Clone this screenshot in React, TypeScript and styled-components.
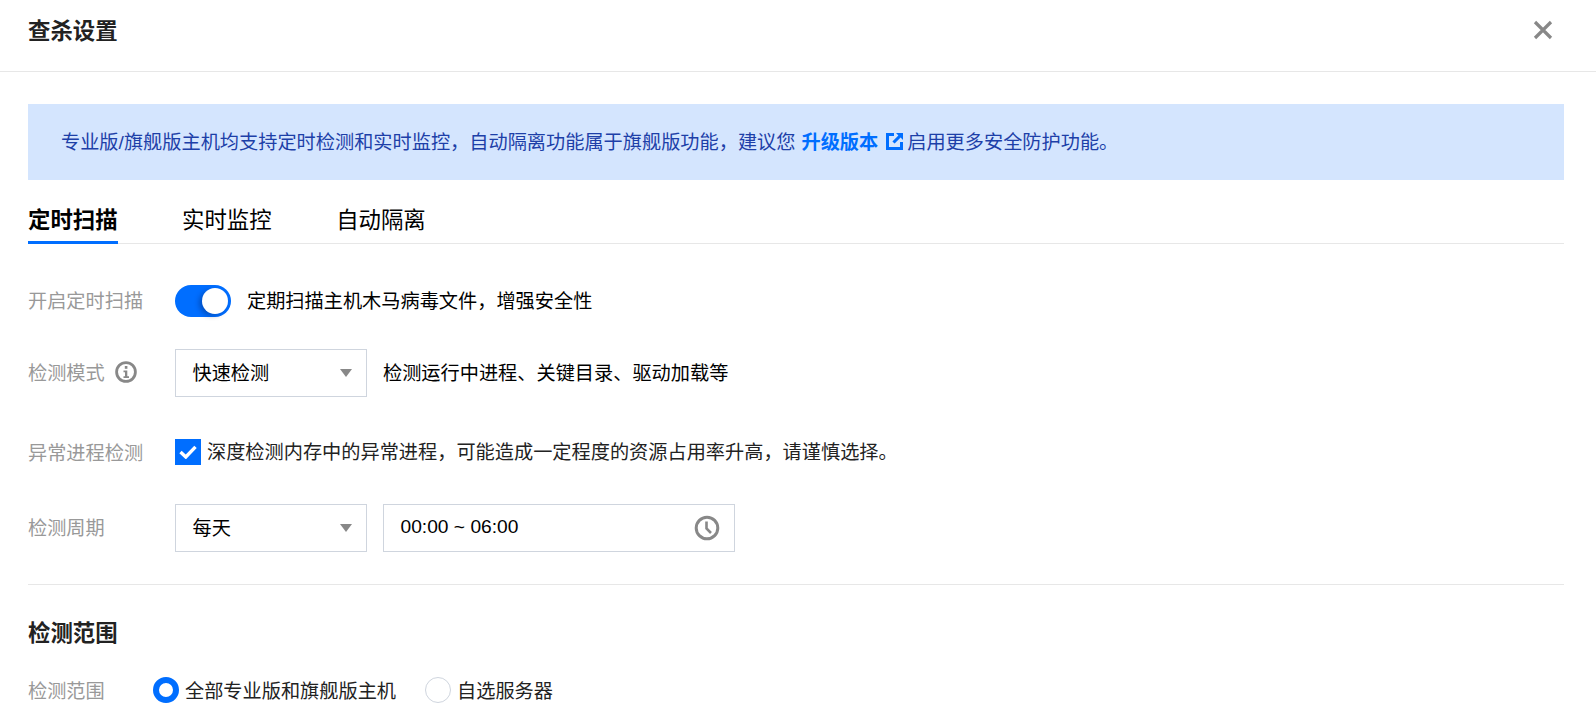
import React from 'react'
import styled, { createGlobalStyle } from 'styled-components'

const GlobalStyle = createGlobalStyle`
  html, body {
    margin: 0;
    height: 100%;
    overflow: hidden;
    background: #fff;
  }
  * {
    box-sizing: border-box;
  }
`

const Page = styled.div`
  width: 1596px;
  height: 726px;
  overflow: hidden;
  color: #000;
  font-family: 'Liberation Sans', 'Noto Sans CJK SC', sans-serif;
  font-size: 19.2px;
`

const Header = styled.header`
  display: flex;
  align-items: center;
  justify-content: space-between;
  height: 72px;
  padding: 0 43px 11px 28px;
  border-bottom: 1px solid #e7e7e7;
`

const Title = styled.h1`
  margin: 0 0 3px;
  font-size: 22.4px;
  font-weight: 700;
  color: #222;
`

const CloseButton = styled.button`
  display: flex;
  padding: 0;
  border: none;
  background: transparent;
`

const Body = styled.main`
  padding: 32px 32px 0 28px;
`

const Notice = styled.div`
  display: flex;
  align-items: center;
  height: 76px;
  padding: 0 33px 3px;
  background: #d4e5fe;
  color: #1d3fa8;
`

const NoticeLink = styled.a`
  display: inline-flex;
  align-items: center;
  gap: 8px;
  margin: 0 4px 0 6px;
  color: #006eff;
  font-weight: 700;

  svg {
    margin-top: 2px;
  }
`

const Tabs = styled.nav`
  display: flex;
  gap: 64.5px;
  height: 64px;
  margin-bottom: 41px;
  border-bottom: 1px solid #e7e7e7;
`

const Tab = styled.div<{ $active?: boolean }>`
  height: 64px;
  padding-top: 26px;
  font-size: 22.4px;
  line-height: 30px;
  font-weight: ${(p) => (p.$active ? 700 : 400)};
  border-bottom: 3px solid ${(p) => (p.$active ? '#006eff' : 'transparent')};
`

const Row = styled.div<{ $height: number; $gap?: number }>`
  display: flex;
  align-items: center;
  height: ${(p) => p.$height}px;
  margin-bottom: ${(p) => p.$gap ?? 0}px;
`

const Label = styled.div<{ $width?: number; $lift?: number }>`
  display: flex;
  align-items: center;
  gap: 10px;
  flex: none;
  width: ${(p) => p.$width ?? 147}px;
  padding-bottom: ${(p) => p.$lift ?? 3}px;
  color: #999;

  svg {
    margin-top: 1px;
  }
`

const Switch = styled.div`
  position: relative;
  flex: none;
  width: 56px;
  height: 32px;
  margin-right: 16px;
  border-radius: 16px;
  background: #006eff;
`

const SwitchKnob = styled.span`
  position: absolute;
  top: 3px;
  right: 3px;
  width: 26px;
  height: 26px;
  border-radius: 50%;
  background: #fff;
  box-shadow: -3px 2px 5px rgba(0, 30, 90, 0.35);
`

const SwitchText = styled.div`
  padding-bottom: 3px;
`

const Field = styled.div<{ $width: number }>`
  display: flex;
  align-items: center;
  justify-content: space-between;
  flex: none;
  width: ${(p) => p.$width}px;
  height: 48px;
  padding: 0 14px 3px 16.5px;
  border: 1px solid #cfd5de;
`

const Caret = styled.span`
  width: 0;
  height: 0;
  margin-top: 3px;
  border-left: 6.5px solid transparent;
  border-right: 6.5px solid transparent;
  border-top: 8px solid #888;
`

const ClockIcon = styled.svg`
  margin-top: 3px;
`

const Hint = styled.div`
  margin-left: 16px;
  padding-bottom: 3px;
`

const Checkbox = styled.div`
  display: flex;
  align-items: center;
  justify-content: center;
  flex: none;
  width: 26px;
  height: 26px;
  margin-right: 6px;
  background: #006eff;
`

const CheckText = styled.div`
  color: #222;
  margin-top: -3px;
`

const TimeGap = styled.div`
  width: 16px;
`

const Divider = styled.hr`
  height: 1px;
  margin: 32px 0 32px;
  border: none;
  background: #e7e7e7;
`

const SectionTitle = styled.h2`
  margin: 0 0 26px;
  font-size: 22.4px;
  line-height: 34px;
  font-weight: 700;
  color: #222;
`

const RadioGroup = styled.div`
  display: flex;
  align-items: center;
  gap: 29px;
`

const RadioOption = styled.div`
  display: flex;
  align-items: center;
  gap: 6px;
  color: #222;
`

const RadioDot = styled.span<{ $checked?: boolean }>`
  flex: none;
  width: 26px;
  height: 26px;
  border-radius: 50%;
  border: ${(p) => (p.$checked ? '6px solid #006eff' : '1px solid #cfd5de')};
  background: #fff;
`

export default function App() {
  return (
    <Page>
      <GlobalStyle />
      <Header>
        <Title>查杀设置</Title>
        <CloseButton aria-label="关闭">
          <svg width="20" height="20" viewBox="0 0 20 20">
            <path d="M2 2 L18 18 M18 2 L2 18" stroke="#888" strokeWidth="3.2" fill="none" />
          </svg>
        </CloseButton>
      </Header>
      <Body>
        <Notice>
          专业版/旗舰版主机均支持定时检测和实时监控，自动隔离功能属于旗舰版功能，建议您
          <NoticeLink>
            升级版本
            <svg width="17" height="17" viewBox="0 0 17 17">
              <path
                d="M0 0 H8 V3 H3 V14 H14 V9 H17 V17 H0 Z M10 0 H17 V7 L14.6 4.6 L8.6 10.6 L6.4 8.4 L12.4 2.4 Z"
                fill="#006eff"
              />
            </svg>
          </NoticeLink>
          启用更多安全防护功能。
        </Notice>
        <Tabs>
          <Tab $active>定时扫描</Tab>
          <Tab>实时监控</Tab>
          <Tab>自动隔离</Tab>
        </Tabs>
        <Row $height={32} $gap={32}>
          <Label>开启定时扫描</Label>
          <Switch>
            <SwitchKnob />
          </Switch>
          <SwitchText>定期扫描主机木马病毒文件，增强安全性</SwitchText>
        </Row>
        <Row $height={48} $gap={42}>
          <Label>
            检测模式
            <svg width="22" height="22" viewBox="0 0 22 22">
              <circle cx="11" cy="11" r="9.4" stroke="#888" strokeWidth="2.8" fill="none" />
              <rect x="9.8" y="5" width="2.6" height="2.8" fill="#888" />
              <path d="M8.5 9.5 H12.3 V15.2 H14 V17 H8.5 V15.2 H10 V11.2 H8.5 Z" fill="#888" />
            </svg>
          </Label>
          <Field $width={192}>
            快速检测
            <Caret />
          </Field>
          <Hint>检测运行中进程、关键目录、驱动加载等</Hint>
        </Row>
        <Row $height={26} $gap={39}>
          <Label $lift={0}>异常进程检测</Label>
          <Checkbox>
            <svg width="18" height="14" viewBox="0 0 18 14">
              <path d="M1.5 7 L6.8 12 L16.5 1.8" stroke="#fff" strokeWidth="3.4" fill="none" />
            </svg>
          </Checkbox>
          <CheckText>深度检测内存中的异常进程，可能造成一定程度的资源占用率升高，请谨慎选择。</CheckText>
        </Row>
        <Row $height={48}>
          <Label>检测周期</Label>
          <Field $width={192}>
            每天
            <Caret />
          </Field>
          <TimeGap />
          <Field $width={352}>
            00:00 ~ 06:00
            <ClockIcon width="26" height="26" viewBox="0 0 26 26">
              <circle cx="13" cy="13" r="10.8" stroke="#888" strokeWidth="3" fill="none" />
              <path d="M12.5 6.5 V13.5 L17 18" stroke="#888" strokeWidth="2.6" fill="none" />
            </ClockIcon>
          </Field>
        </Row>
        <Divider />
        <SectionTitle>检测范围</SectionTitle>
        <Row $height={26}>
          <Label $width={125} $lift={0}>检测范围</Label>
          <RadioGroup>
            <RadioOption>
              <RadioDot $checked />
              全部专业版和旗舰版主机
            </RadioOption>
            <RadioOption>
              <RadioDot />
              自选服务器
            </RadioOption>
          </RadioGroup>
        </Row>
      </Body>
    </Page>
  )
}
